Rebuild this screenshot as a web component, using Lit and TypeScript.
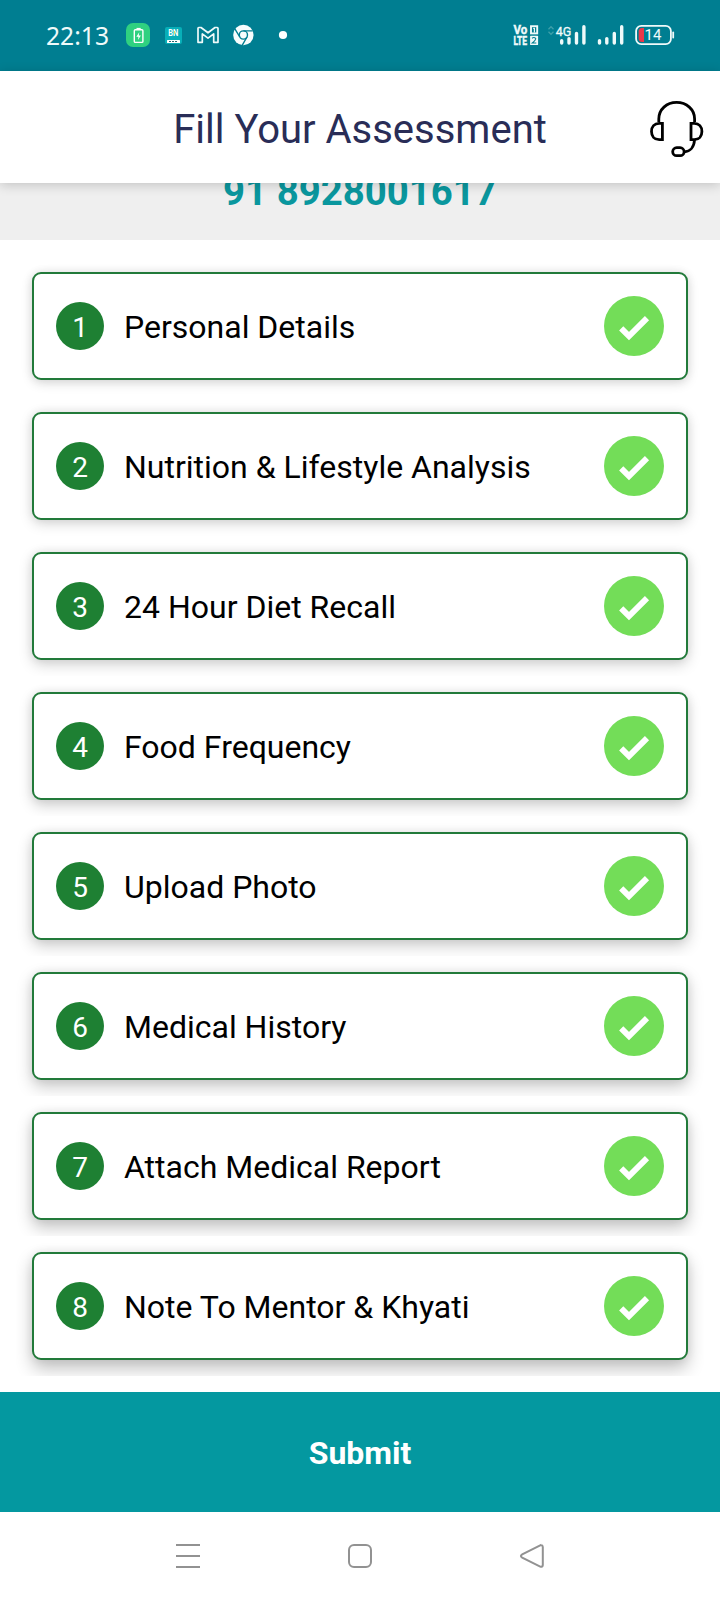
import { LitElement, html, css, svg } from "lit";
import { customElement, property } from "lit/decorators.js";

@customElement("status-bar")
class StatusBar extends LitElement {
  static styles = css`
    :host { display: block; height: 71px; background: #007e91; }
    svg { display: block; }
    .time { font-family: "Noto Sans", sans-serif; font-size: 25px; }
    .bn { font-family: Roboto, sans-serif; font-weight: 700; font-size: 8.8px; }
    .tiny { font-family: Roboto, sans-serif; font-weight: 700; font-size: 12.4px; }
    .net { font-family: Roboto, sans-serif; font-size: 13px; }
    .bat { font-family: Roboto, sans-serif; font-size: 15px; }
  `;
  render() {
    const bars = (x: number) => svg`
      <g stroke="#effafa" stroke-width="3.4" stroke-linecap="round">
        <path d="M${x} 40.8v2.2M${x + 7.3} 38.6v4.4M${x + 14.8} 33.4v9.6M${x + 22.2} 26.7v16.3"/>
      </g>`;
    return html`<svg width="720" height="71" viewBox="0 0 720 71" fill="none">
      <text class="time" x="46" y="44.8" textLength="63" lengthAdjust="spacingAndGlyphs" fill="#effafa">22:13</text>
      <rect x="126" y="23" width="24" height="24" rx="7" fill="#2fd180"/>
      <rect x="134.3" y="29.8" width="8.6" height="12.6" rx="1" stroke="#fff" stroke-width="1.4"/>
      <path d="M136.5 28.7h4.2" stroke="#fff" stroke-width="1.6"/>
      <path d="M139.3 32.3l-3 4.4h2.2l-.6 3.3 3-4.5h-2.2z" fill="#fff"/>
      <rect x="165" y="27" width="17" height="17" rx="2" fill="#08afb8"/>
      <text class="bn" transform="translate(168.2 36.3) scale(.85 1)" fill="#fff">BN</text>
      <path d="M174.2 31l.8 3" stroke="#e5d94b" stroke-width="1"/>
      <rect x="167" y="40" width="13" height="3" rx=".5" fill="#fff"/>
      <path d="M169 41.5h9" stroke="#135a68" stroke-width=".9" stroke-dasharray="2 1"/>
      <path d="M198 42.3v-14q0-.8.8-.8h2.2l7 5.3 7-5.3h2.2q.8 0 .8.8v14h-4.3v-8.4l-5.7 4.2-5.7-4.2v8.4z" stroke="#effafa" stroke-width="1.7" stroke-linejoin="round"/>
      <circle cx="243.4" cy="35" r="10.2" fill="#f7fdfd"/>
      <circle cx="243.4" cy="35" r="4.1" stroke="#007e91" stroke-width="1.4"/>
      <path d="M243.4 30.9h9.4M239.8 37l-4.9-8.2M247 37l-4.7 8.2" stroke="#007e91" stroke-width="1.4"/>
      <circle cx="283" cy="35" r="4.1" fill="#fff"/>

      <g fill="#effafa" stroke="#effafa" stroke-width=".4">
        <text class="tiny" transform="translate(513.4 34.2) scale(.93 1)">Vo</text>
        <text class="tiny" transform="translate(513.4 45) scale(.69 1)">LTE</text>
      </g>
      <rect x="531" y="26.2" width="6.2" height="7.2" stroke="#effafa" stroke-width="1.9"/>
      <path d="M533.2 28.4h1.2v4" stroke="#effafa" stroke-width="1.2"/>
      <rect x="530.1" y="35.8" width="8" height="9.3" rx=".6" fill="#effafa"/>
      <path d="M532 38.2q2-1.4 3.7 0.1q.5 1.4-3.4 4.7h4" stroke="#007e91" stroke-width="1.1"/>
      <path d="M548.5 29.2l2.5-2.5 2.5 2.5M548.5 31.8l2.5 2.5 2.5-2.5" stroke="#3e9fa9" stroke-width="1.3"/>
      <text class="net" x="555.8" y="36.1" textLength="15.6" lengthAdjust="spacingAndGlyphs" fill="#effafa" stroke="#effafa" stroke-width=".3">4G</text>
      ${bars(561.7)}${bars(599.5)}
      <rect x="636.1" y="25.9" width="34.8" height="18.2" rx="5.2" stroke="#effafa" stroke-width="1.8"/>
      <path d="M673.2 32.5v5" stroke="#effafa" stroke-width="1.8" stroke-linecap="round"/>
      <path d="M644 28v14h-2q-3.3 0-3.3-3.5v-7q0-3.5 3.3-3.5z" fill="#ec3748"/>
      <text class="bat" x="644.6" y="40.4" fill="#effafa">14</text>
    </svg>`;
  }
}

@customElement("step-card")
class StepCard extends LitElement {
  @property({ type: Number }) number = 1;
  @property() label = "";
  static styles = css`
    :host { display: block; padding: 16px; overflow: hidden; }
    .card {
      box-sizing: border-box; height: 108px; padding: 0 22px; display: flex; align-items: center;
      background: #fff; border: 2px solid #227a3a; border-radius: 9px;
      box-shadow: 0 var(--drop, 4px) var(--blur, 12px) rgba(0, 0, 0, var(--shade, .2)), 0 0 10px rgba(0, 0, 0, .07);
    }
    .badge {
      width: 48px; height: 48px; border-radius: 50%; background: #1e8033; color: #fff;
      font-size: 28px; line-height: 52px; text-align: center;
    }
    .label { flex: 1; margin-left: 20px; font-size: 32px; line-height: 38px; padding-top: 2px; color: #000; white-space: nowrap; }
    svg { display: block; }
  `;
  render() {
    return html`<div class="card">
      <div class="badge">${this.number}</div>
      <div class="label">${this.label}</div>
      <svg width="60" height="60" viewBox="0 0 60 60">
        <circle cx="30" cy="30" r="30" fill="#73dd58"/>
        <path d="M17.2 32.3l7.8 7.8L43 22.1" fill="none" stroke="#fff" stroke-width="5.9"/>
      </svg>
    </div>`;
  }
}

@customElement("app-root")
class AppRoot extends LitElement {
  static styles = css`
    :host { display: flex; flex-direction: column; height: 1600px; background: #fff; font-family: Roboto, sans-serif; overflow: hidden; }
    .header { position: relative; z-index: 1; height: 112px; box-sizing: border-box; background: #fff; display: grid; grid-template-columns: 80px 1fr 80px; align-items: center; box-shadow: 0 2px 11px rgba(0, 0, 0, .19); }
    .title { grid-column: 2; text-align: center; font-size: 40px; line-height: 48px; padding-top: 6px; color: #292d57; white-space: nowrap; }
    .support { display: block; }
    .phone { height: 57px; background: #efefef; color: #0a979e; font-size: 38.4px; font-weight: 700; line-height: 48px; overflow: hidden; display: flex; justify-content: center; align-items: flex-start; }
    .number { margin-top: -15px; }
    .list { padding: 16px; }
    .submit { height: 120px; border: 0; padding: 2px 0 0; background: #0498a0; color: #fff; font: 700 32px/38px Roboto, sans-serif; }
    .nav { height: 88px; }
    .nav svg { display: block; }
  `;
  private steps = [
    "Personal Details", "Nutrition & Lifestyle Analysis", "24 Hour Diet Recall", "Food Frequency",
    "Upload Photo", "Medical History", "Attach Medical Report", "Note To Mentor & Khyati",
  ];
  render() {
    return html`
      <status-bar></status-bar>
      <div class="header">
        <div class="title">Fill Your Assessment</div>
        <svg class="support" width="80" height="112" viewBox="640 71 80 112" fill="none" stroke="#000" stroke-width="2.8">
          <path d="M658.8 122v-3c0-9.5 7.8-16.6 17.8-16.6s18 7.1 18 16.6v3"/>
          <path d="M662.4 123.3v16.4h-3.2c-4.9 0-7.7-3.6-7.7-8.2s2.8-8.2 7.7-8.2z"/>
          <path d="M691 123.3v16.4h3.2c4.9 0 7.7-3.6 7.7-8.2s-2.8-8.2-7.7-8.2z"/>
          <path d="M694.5 140c-.4 7-4.2 11.6-10.2 11.8"/>
          <rect x="672.7" y="147.7" width="11.4" height="8" rx="4"/>
        </svg>
      </div>
      <div class="phone"><div class="number">91 8928001617</div></div>
      <div class="list">
        ${this.steps.map((label, i) => html`<step-card .number=${i + 1} .label=${label}
          style="--drop:${3 + i * 0.75}px;--blur:${12 + i * 0.7}px;--shade:${0.14 + i * 0.014}"></step-card>`)}
      </div>
      <button class="submit">Submit</button>
      <div class="nav">
        <svg width="720" height="88" viewBox="0 1512 720 88" fill="none" stroke="#929292" stroke-width="2">
          <path d="M176 1545h24M176 1556h24M176 1567h24"/>
          <rect x="349" y="1545" width="22" height="22" rx="5"/>
          <path d="M540.2 1545.3l-18 9q-2.6 1.6 0 3.3l18 9q2.3.7 2.6-1.6v-18q-.3-2.4-2.6-1.7z"/>
        </svg>
      </div>`;
  }
}
